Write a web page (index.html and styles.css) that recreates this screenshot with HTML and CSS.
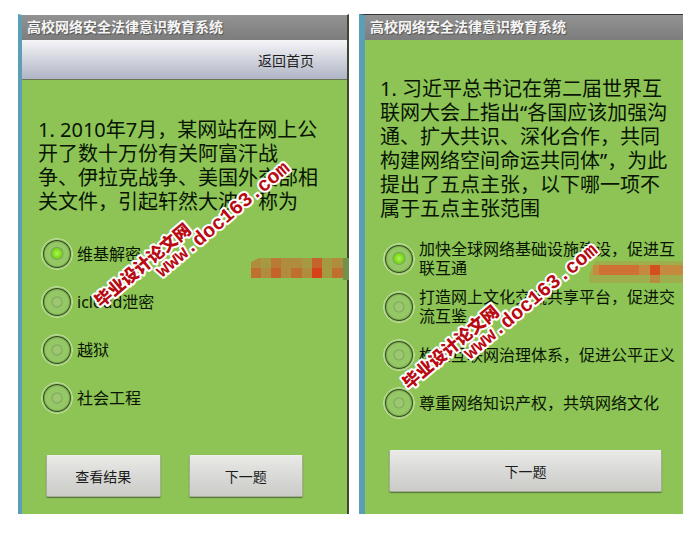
FILE: index.html
```html
<!DOCTYPE html>
<html lang="zh-CN">
  <head>
    <meta charset="UTF-8" />
    <meta name="viewport" content="width=device-width, initial-scale=1.0" />
    <title>高校网络安全法律意识教育系统</title>
    <link rel="stylesheet" href="styles.css">
  </head>
  <body>
    <div class="screens">
      <!-- 第一题 -->
      <form class="screen screen-left">
        <h1 class="title-bar">高校网络安全法律意识教育系统</h1>
        <nav class="nav-bar"><a href="#">返回首页</a></nav>
        <div class="content">
          <p class="question" id="q1">
            1. 2010年7月，某网站在网上公<br />开了数十万份有关阿富汗战<br />争、伊拉克战争、美国外交部相<br />关文件，引起轩然大波，称为
          </p>
          <div class="options" role="radiogroup" aria-labelledby="q1">
            <label class="option"><input type="radio" name="a1" checked /><span>维基解密</span></label>
            <label class="option"><input type="radio" name="a1" /><span>icloud泄密</span></label>
            <label class="option"><input type="radio" name="a1" /><span>越狱</span></label>
            <label class="option"><input type="radio" name="a1" /><span>社会工程</span></label>
          </div>
          <div class="buttons">
            <button type="button">查看结果</button>
            <button type="button">下一题</button>
          </div>
        </div>
        <svg class="mosaic" width="98" height="22" viewBox="0 0 98 22" aria-hidden="true">
          <path d="M0 4L8 0H98V20H0Z" fill="#b08c3e" />
          <path d="M0 10H10V20H0ZM40 10H51V20H40ZM81 10H92V20H81Z" fill="#c0702e" />
          <path d="M20 0H30V10H20Z" fill="#b87a36" />
          <path d="M20 10H30V20H20Z" fill="#c5632c" />
          <path d="M61 0H71V10H61Z" fill="#c5632c" />
          <path d="M61 10H71V20H61Z" fill="#d64318" />
          <path d="M10 0H20V10H10ZM51 0H61V10H51ZM71 0H81V20H71Z" fill="#a59a42" />
          <path d="M92 0H98V22H92Z" fill="#70924c" />
        </svg>
        <svg class="watermark" width="210" height="160" viewBox="0 0 210 160" aria-hidden="true">
          <text class="mark-cn" transform="translate(17 155) rotate(-40)">毕业设计论文网</text>
          <text class="mark-url" transform="translate(78 125) rotate(-40)">www.doc163.com</text>
        </svg>
      </form>

      <!-- 第二题 -->
      <form class="screen screen-right">
        <h1 class="title-bar">高校网络安全法律意识教育系统</h1>
        <div class="content">
          <p class="question" id="q2">
            1. 习近平总书记在第二届世界互<br />联网大会上指出“各国应该加强沟<br />通、扩大共识、深化合作，共同<br />构建网络空间命运共同体”，为此<br />提出了五点主张，以下哪一项不<br />属于五点主张范围
          </p>
          <div class="options" role="radiogroup" aria-labelledby="q2">
            <label class="option"><input type="radio" name="a2" checked /><span>加快全球网络基础设施建设，促进互<br />联互通</span></label>
            <label class="option"><input type="radio" name="a2" /><span>打造网上文化交流共享平台，促进交<br />流互鉴</span></label>
            <label class="option"><input type="radio" name="a2" /><span>构建互联网治理体系，促进公平正义</span></label>
            <label class="option"><input type="radio" name="a2" /><span>尊重网络知识产权，共筑网络文化</span></label>
          </div>
          <div class="buttons">
            <button type="button">下一题</button>
          </div>
        </div>
        <svg class="mosaic" width="94" height="22" viewBox="0 0 94 22" aria-hidden="true">
          <path d="M0 14L6 0H94V22H0Z" fill="#9fae4c" />
          <path d="M4 4H94V14H4Z" fill="#c58a3e" />
          <path d="M10 4H50V14H10Z" fill="#cf7034" />
          <path d="M61 4H71V14H61Z" fill="#d3501e" />
          <path d="M61 14H71V22H61Z" fill="#b88c40" />
        </svg>
        <svg class="watermark" width="210" height="160" viewBox="0 0 210 160" aria-hidden="true">
          <text class="mark-cn" transform="translate(17 155) rotate(-40)">毕业设计论文网</text>
          <text class="mark-url" transform="translate(78 125) rotate(-40)">www.doc163.com</text>
        </svg>
      </form>
    </div>
  </body>
</html>
```
FILE: styles.css
```css
* {
  box-sizing: border-box;
}
body {
  margin: 0;
  padding: 14px 11px 36px 18px;
  background-color: #fff;
  color: #081404;
  font-family: "Noto Sans", "Noto Sans CJK SC", sans-serif;
}
.screens {
  display: grid;
  grid-template-columns: 331fr 324fr;
  gap: 10px;
}
.screen {
  position: relative;
  display: flex;
  flex-direction: column;
  min-width: 0;
  background-color: #8dc455;
  border-left: 4px solid #5a9fb5;
}
.screen-left {
  border-top: 1px solid #fff;
  border-right: 2px solid #3c4632;
}
.screen-right {
  border-top: 1px solid #333;
  border-left-width: 6px;
}
.title-bar {
  margin: 0;
  padding-left: 5px;
  height: 25px;
  line-height: 24px;
  font-size: 14px;
  font-weight: bold;
  color: #f6f6f6;
  white-space: nowrap;
  background: linear-gradient(#929292, #7d7d7d);
  text-shadow: 1px 1px 1px #555;
}
.nav-bar {
  height: 40px;
  padding-right: 33px;
  line-height: 40px;
  text-align: right;
  background: linear-gradient(#f6f6f8, #d2d4de 50%, #b0b5c5);
  border-bottom: 1px solid #66764f;
}
.nav-bar a {
  color: #202020;
  font-size: 14px;
  text-decoration: none;
}
.content {
  flex: 1;
  padding: 38px 16px 17px;
}
.screen-right .content {
  padding: 37px 4px 22px 15px;
}
.question {
  margin: 0 0 16px;
  font-size: 20px;
  line-height: 24px;
  white-space: nowrap;
}
.screen-right .question {
  margin-bottom: 14px;
}
.options {
  margin-left: 3px;
}
.option {
  display: flex;
  align-items: center;
  gap: 4px;
  height: 48px;
  font-size: 16px;
  line-height: 19px;
  white-space: nowrap;
}
/* 圆形单选按钮 */
.option input {
  appearance: none;
  flex: none;
  width: 32px;
  height: 32px;
  margin: 0;
  border: 1px solid #c4e6a0;
  border-radius: 50%;
  background: radial-gradient(circle, #9cc670 4px, #7fa55a 5px, #94c866 6px);
  box-shadow: inset 0 0 0 1px #a9d47e, inset 0 0 0 2px #36501e, inset 0 0 1px 3px #7ba84f;
}
.option input:checked {
  background: radial-gradient(circle at 50% 48%, #a4f04a 1px, #74d417 5px, #7fa35c 6px, #94c866 7px);
}
.buttons {
  display: flex;
  gap: 28px;
  margin: 33px 28px 0 8px;
}
.screen-right .buttons {
  margin: 23px 17px 0 9px;
}
.buttons button {
  flex: 1;
  height: 42px;
  padding: 0;
  border: 1px solid #a5ad98;
  border-top-color: #eee;
  border-radius: 2px;
  background: linear-gradient(#e9e9e6, #d9dad7 50%, #cbccc8);
  box-shadow: 0 1px 1px #54743a;
  color: #1c1c1c;
  font-family: inherit;
  font-size: 14px;
}
/* 题目上方的遮挡和水印 */
.mosaic,
.watermark {
  position: absolute;
  pointer-events: none;
}
.screen-left .mosaic {
  right: -2px;
  top: 243px;
}
.screen-right .mosaic {
  right: 0;
  top: 246px;
}
.watermark {
  left: 62px;
  top: 138px;
}
.screen-right .watermark {
  left: 27px;
  top: 220px;
}
.watermark text {
  fill: #b80a12;
  stroke: #fff;
  stroke-width: 4px;
  stroke-linejoin: round;
  paint-order: stroke;
  font-weight: 900;
}
.mark-cn {
  font-family: "Noto Sans CJK SC", sans-serif;
  font-size: 17px;
}
.mark-url {
  font-family: "Liberation Mono", monospace;
  font-size: 20px;
}
```
